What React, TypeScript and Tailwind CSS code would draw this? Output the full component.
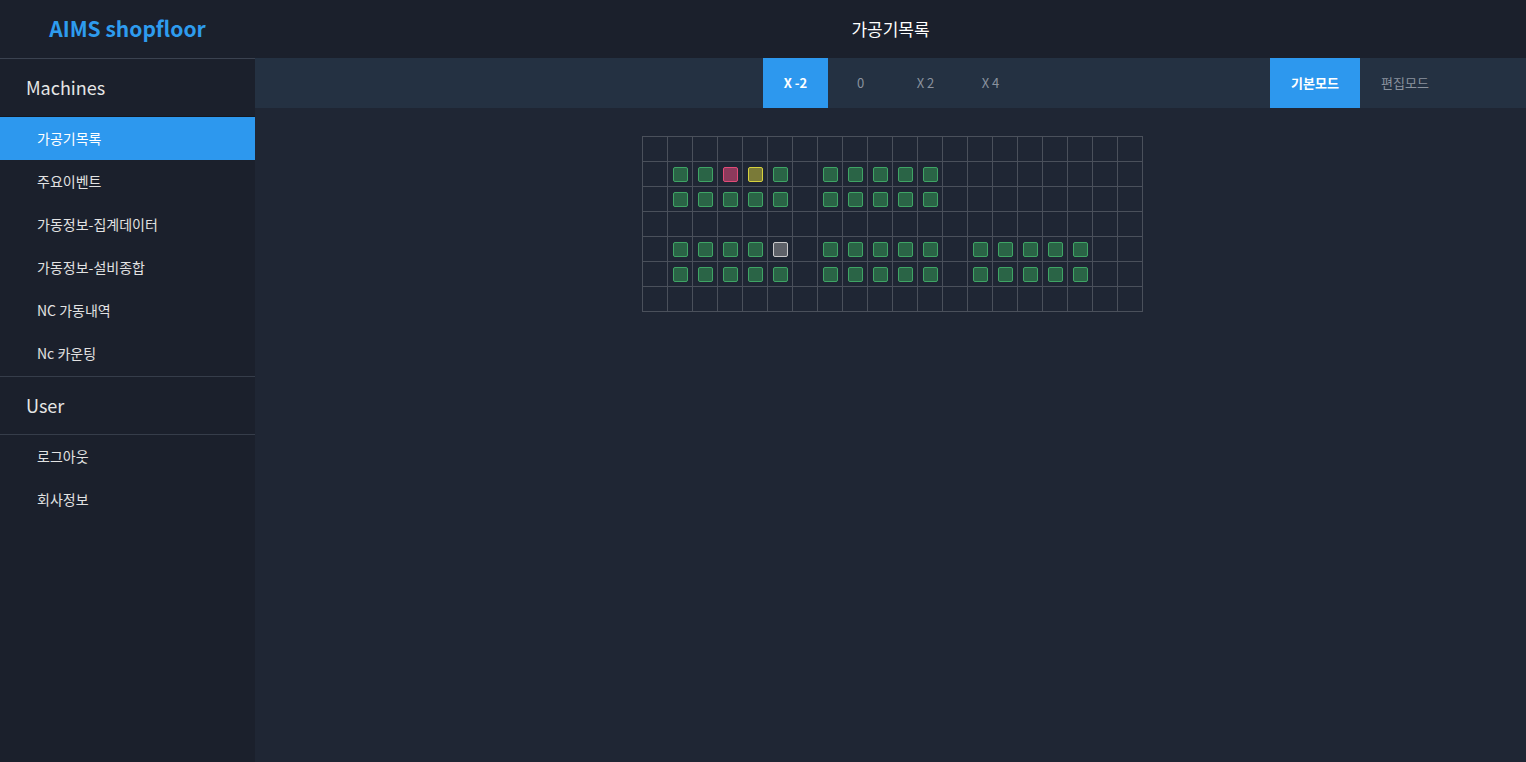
import React from 'react';

const font = { fontFamily: '"Noto Sans CJK KR", "Noto Sans", sans-serif' };

type Cell = 'g' | 'r' | 'y' | 'n' | null;

// 20 x 7 machine layout
const layout: string[] = [
  '....................',
  '.gggyg.ggggg........',
  '.ggggg.ggggg........',
  '....................',
  '.ggggn.ggggg.ggggg..',
  '.ggggg.ggggg.ggggg..',
  '....................',
];

// row 1 col 3 is red
const rows: Cell[][] = layout.map((line, r) =>
  line.split('').map((ch, c) => {
    if (r === 1 && c === 3) return 'r';
    if (ch === '.') return null;
    return ch as Cell;
  })
);

const boxStyle: Record<string, string> = {
  g: 'bg-[#2a6446] border-[#3fa465]',
  r: 'bg-[#8c3a5c] border-[#e24c78]',
  y: 'bg-[#7a7a38] border-[#d6d23e]',
  n: 'bg-[#5e6169] border-[#c9c9cb]',
};

const machineMenu = ['가공기목록', '주요이벤트', '가동정보-집계데이터', '가동정보-설비종합', 'NC 가동내역', 'Nc 카운팅'];
const userMenu = ['로그아웃', '회사정보'];

export default function App() {
  return (
    <div className="flex h-[762px] w-[1526px] flex-col overflow-hidden bg-[#1f2634]" style={font}>
      <header className="flex h-[58px] shrink-0 bg-[#1b202c]">
        <div className="flex w-[255px] items-center justify-center">
          <span className="text-[21px] font-bold text-[#2e9cee]">AIMS shopfloor</span>
        </div>
        <div className="flex flex-1 items-center justify-center">
          <span className="text-[17px] text-white">가공기목록</span>
        </div>
      </header>

      <div className="flex flex-1">
        <aside className="w-[255px] shrink-0 border-t border-[#3b4250] bg-[#1b202c]">
          <div className="flex h-[58px] items-center border-b border-[#141821] pl-[26px] text-[18px] text-[#e6e6e6]">
            Machines
          </div>
          <nav>
            {machineMenu.map((label, i) => (
              <div
                key={label}
                className={`flex h-[43px] items-center pl-[37px] text-[14px] ${
                  i === 0 ? 'bg-[#2d98ee] text-white' : 'text-[#e2e2e2]'
                }`}
              >
                {label}
              </div>
            ))}
          </nav>
          <div className="mt-[1px] flex h-[59px] items-center border-y border-[#363d4a] pl-[26px] text-[18px] text-[#e6e6e6]">
            User
          </div>
          <nav>
            {userMenu.map((label) => (
              <div key={label} className="flex h-[43px] items-center pl-[37px] text-[14px] text-[#e2e2e2]">
                {label}
              </div>
            ))}
          </nav>
        </aside>

        <main className="flex-1">
          <div className="grid h-[50px] grid-cols-[1fr_auto_1fr] bg-[#243142]">
            <div />
            <div className="ml-[5px] flex">
              {['X -2', '0', 'X 2', 'X 4'].map((t, i) => (
                <div
                  key={t}
                  className={`flex w-[65px] items-center justify-center text-[13px] ${
                    i === 0 ? 'bg-[#2d98ee] font-bold text-white' : 'text-[#8a929e]'
                  }`}
                >
                  {t}
                </div>
              ))}
            </div>
            <div className="flex justify-end pr-[76px]">
              <div className="flex w-[90px] items-center justify-center bg-[#2d98ee] text-[13px] font-bold text-white">
                기본모드
              </div>
              <div className="flex w-[90px] items-center justify-center text-[13px] text-[#8a929e]">편집모드</div>
            </div>
          </div>

          <div className="mt-[28px] flex justify-center">
            <div className="ml-[4px] border-l border-t border-[#4a505b]">
              {rows.map((row, r) => (
                <div key={r} className="flex">
                  {row.map((cell, c) => (
                    <div
                      key={c}
                      className="flex h-[25px] w-[25px] items-center justify-center border-b border-r border-[#4a505b] pl-[1px] pt-[1px]"
                    >
                      {cell && <div className={`h-[15px] w-[15px] rounded-[2px] border ${boxStyle[cell]}`} />}
                    </div>
                  ))}
                </div>
              ))}
            </div>
          </div>
        </main>
      </div>
    </div>
  );
}
